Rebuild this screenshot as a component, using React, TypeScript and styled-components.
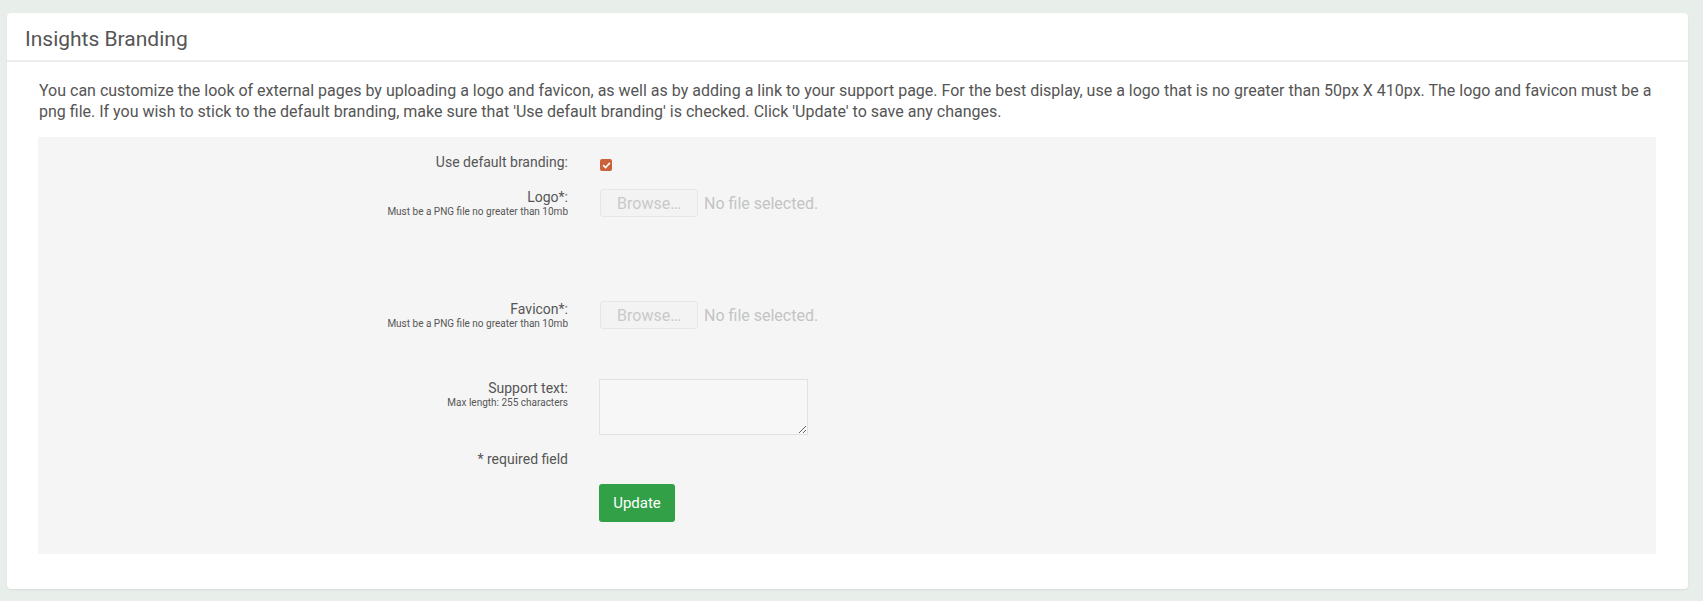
import { createGlobalStyle, styled } from "styled-components";

const GlobalStyle = createGlobalStyle`
  html, body {
    margin: 0;
    padding: 0;
    background: #e8eeea;
  }
  body {
    font-family: Roboto, "Liberation Sans", Arial, sans-serif;
    color: #555;
  }
`;

const Page = styled.div`
  padding: 13px 15px 12px 7px;
`;

const Card = styled.section`
  background: #fff;
  border-radius: 4px;
  box-shadow: 0 1px 2px rgba(0, 0, 0, 0.08);
`;

const CardHeader = styled.header`
  height: 49px;
  box-sizing: border-box;
  display: flex;
  align-items: center;
  padding: 5px 18px 0;
  border-bottom: 2px solid #ebeeec;
`;

const Title = styled.h2`
  margin: 0;
  font-size: 21px;
  font-weight: 400;
  color: #555;
`;

const CardBody = styled.div`
  padding: 18px 32px 35px 31px;
`;

const Intro = styled.p`
  margin: 0 0 15px 1px;
  font-size: 16px;
  line-height: 21px;
  color: #555;
`;

const FormPanel = styled.form`
  background: #f5f5f5;
  padding: 16px 0 32px;
`;

const Row = styled.div<{ $space?: number }>`
  display: flex;
  align-items: flex-start;
  gap: 31px;
  margin-bottom: ${(p) => p.$space ?? 0}px;
`;

const LabelCol = styled.div`
  width: 530px;
  flex: none;
  display: flex;
  flex-direction: column;
  align-items: flex-end;
  text-align: right;
`;

const Label = styled.label`
  font-size: 14px;
  line-height: 18px;
  color: #555;
`;

const Hint = styled.span`
  font-size: 10px;
  line-height: 12px;
  color: #555;
`;

const Control = styled.div<{ $offset?: number }>`
  display: flex;
  align-items: center;
  gap: 6px;
  padding-top: ${(p) => p.$offset ?? 0}px;
`;

const CheckBox = styled.span`
  width: 12px;
  height: 12px;
  border-radius: 2px;
  background: #c9623a;
  display: flex;
  align-items: center;
  justify-content: center;
  margin-left: 1px;
`;

const BrowseButton = styled.button`
  width: 98px;
  height: 28px;
  border: 1px solid #e6e6e6;
  border-radius: 3px;
  background: #f3f3f3;
  color: #c9c9c9;
  font-family: inherit;
  font-size: 16px;
  padding: 0;
  margin-left: 1px;
`;

const FileName = styled.span`
  font-size: 16px;
  color: #c4c4c4;
`;

const TextArea = styled.textarea`
  width: 209px;
  height: 56px;
  box-sizing: border-box;
  border: 1px solid #e2e2e2;
  background: #f7f7f7;
  border-radius: 0;
  font-family: inherit;
  resize: both;
`;

const SubmitButton = styled.button`
  width: 76px;
  height: 38px;
  border: none;
  border-radius: 3px;
  background: #31a046;
  color: #fff;
  font-family: inherit;
  font-size: 15px;
  cursor: pointer;
`;

const Check = () => (
  <svg width="9" height="9" viewBox="0 0 10 10">
    <path
      d="M1.8 5.2 4 7.3 8.3 2.6"
      fill="none"
      stroke="#fff"
      strokeWidth="1.8"
      strokeLinecap="round"
      strokeLinejoin="round"
    />
  </svg>
);

const FileField = ({ label }: { label: string }) => (
  <>
    <LabelCol>
      <Label>{label}</Label>
      <Hint>Must be a PNG file no greater than 10mb</Hint>
    </LabelCol>
    <Control $offset={1}>
      <BrowseButton type="button" disabled>
        Browse…
      </BrowseButton>
      <FileName>No file selected.</FileName>
    </Control>
  </>
);

export default function App() {
  return (
    <Page>
      <GlobalStyle />
      <Card>
        <CardHeader>
          <Title>Insights Branding</Title>
        </CardHeader>
        <CardBody>
          <Intro>
            You can customize the look of external pages by uploading a logo and
            favicon, as well as by adding a link to your support page. For the
            best display, use a logo that is no greater than 50px X 410px. The
            logo and favicon must be a png file. If you wish to stick to the
            default branding, make sure that 'Use default branding' is checked.
            Click 'Update' to save any changes.
          </Intro>
          <FormPanel onSubmit={(e) => e.preventDefault()}>
            <Row $space={17}>
              <LabelCol>
                <Label>Use default branding:</Label>
              </LabelCol>
              <Control $offset={6}>
                <CheckBox>
                  <Check />
                </CheckBox>
              </Control>
            </Row>
            <Row $space={82}>
              <FileField label="Logo*:" />
            </Row>
            <Row $space={49}>
              <FileField label="Favicon*:" />
            </Row>
            <Row $space={15}>
              <LabelCol>
                <Label>Support text:</Label>
                <Hint>Max length: 255 characters</Hint>
              </LabelCol>
              <Control>
                <TextArea />
              </Control>
            </Row>
            <Row $space={16}>
              <LabelCol>
                <Label>* required field</Label>
              </LabelCol>
            </Row>
            <Row>
              <LabelCol />
              <Control>
                <SubmitButton type="submit">Update</SubmitButton>
              </Control>
            </Row>
          </FormPanel>
        </CardBody>
      </Card>
    </Page>
  );
}
